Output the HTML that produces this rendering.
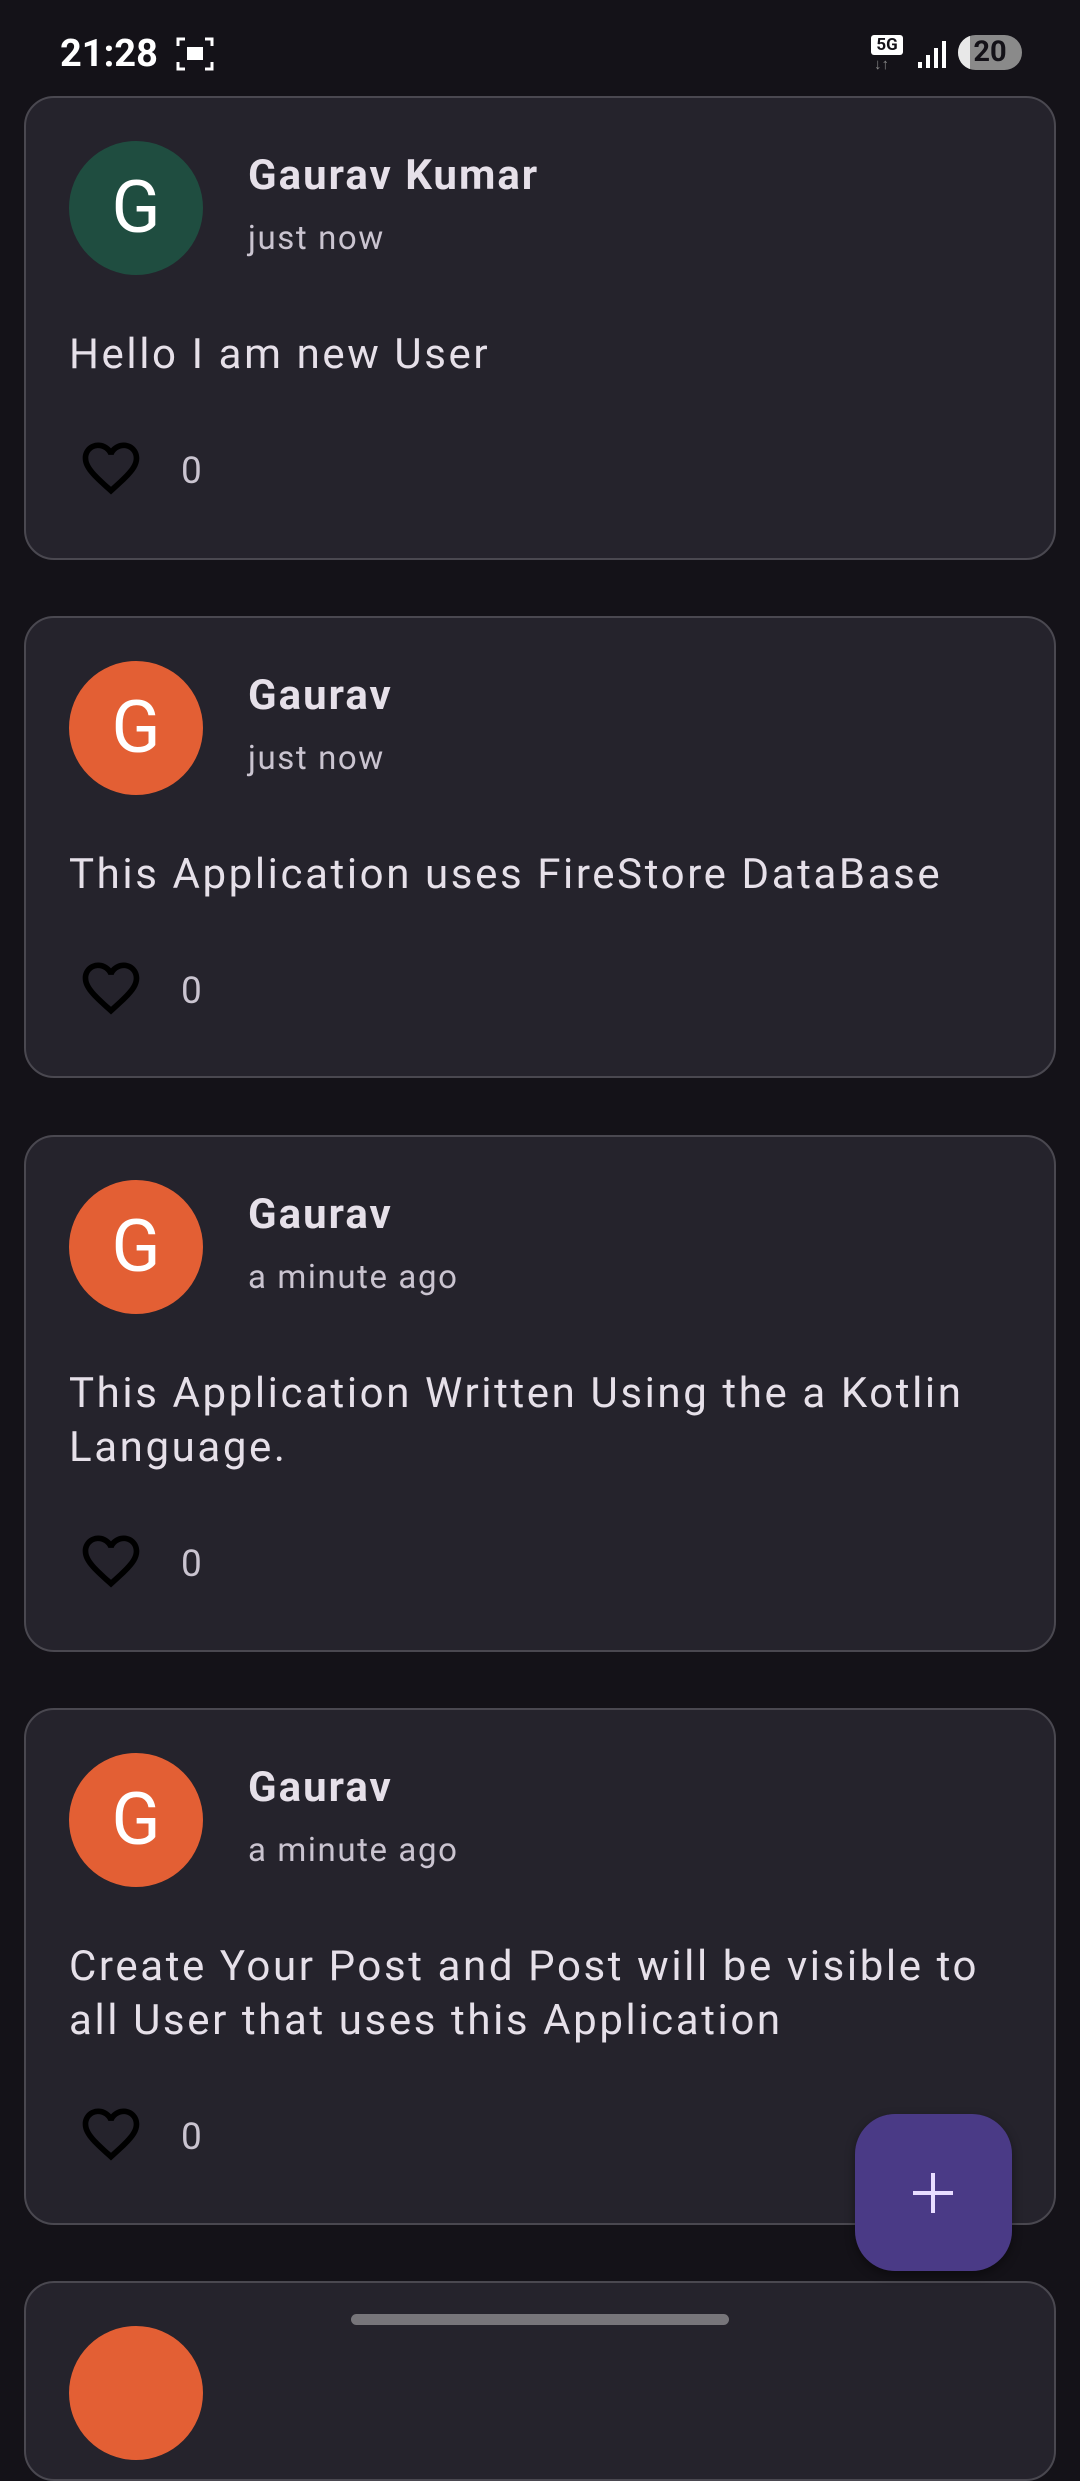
<!DOCTYPE html>
<html><head><meta charset="utf-8"><style>
*{margin:0;padding:0;box-sizing:border-box}
body{width:1080px;height:2340px;background:#141218;position:relative;overflow:hidden;font-family:"Roboto","Liberation Sans",sans-serif;color:#e6e0e9}
.card{position:absolute;left:24px;width:1032px;background:#25232c;border:2px solid #4a4850;border-radius:30px}
.av{position:absolute;left:43px;width:134px;height:134px;border-radius:50%;color:#fff;font-size:72px;text-align:center;line-height:134px}
.name{position:absolute;left:222px;font-weight:bold;font-size:42px;letter-spacing:2px;line-height:48px;white-space:nowrap}
.time{position:absolute;left:222px;font-size:33px;letter-spacing:1.6px;line-height:40px;color:#cac4d0}
.body{position:absolute;left:43px;width:960px;font-size:42px;letter-spacing:2.6px;line-height:54px}
.heart{position:absolute;left:51px;width:68px;height:68px}
.cnt{position:absolute;left:155px;font-size:37px;line-height:44px;color:#cac4d0}
</style></head><body>
<div style="position:absolute;left:60px;top:32px;font-weight:bold;font-size:38px;color:#fff">21:28</div>
<svg style="position:absolute;left:176px;top:36px" width="38" height="36" viewBox="0 0 38 36" fill="none" stroke="#fff" stroke-width="3"><path d="M2 10V3h7M29 3h7v7M36 26v7h-7M9 33H2v-7"/><rect x="11" y="11" width="16" height="13" fill="#fff" stroke="none"/></svg>
<div style="position:absolute;left:871px;top:35px;width:32px;height:20px;background:#fff;border-radius:3px;color:#141218;font-size:17px;font-weight:bold;text-align:center;line-height:20px">5G</div>
<div style="position:absolute;left:874px;top:55px;font-size:15px;color:#888">↓↑</div>
<div style="position:absolute;left:918px;top:62px;width:4px;height:6px;background:#fff"></div>
<div style="position:absolute;left:926px;top:55px;width:4px;height:13px;background:#fff"></div>
<div style="position:absolute;left:934px;top:48px;width:4px;height:20px;background:#fff"></div>
<div style="position:absolute;left:942px;top:41px;width:4px;height:27px;background:#fff"></div>
<div style="position:absolute;left:958px;top:35px;width:64px;height:35px;border-radius:18px;background:#8a8a8a;overflow:hidden"><div style="width:12px;height:35px;background:#e8e8e8"></div></div>
<div style="position:absolute;left:958px;top:35px;width:64px;height:35px;text-align:center;font-weight:bold;font-size:29px;line-height:35px;color:#141218">20</div>

<div class="card" style="top:96px;height:464px">
<div class="av" style="top:43px;background:#1f4d40">G</div>
<div class="name" style="top:54px">Gaurav Kumar</div>
<div class="time" style="top:121px">just now</div>
<div class="body" style="top:230px">Hello I am new User</div>
<svg class="heart" style="top:336px" viewBox="0 0 24 24"><path d="M16.5 3c-1.74 0-3.41.81-4.5 2.09C10.91 3.81 9.24 3 7.5 3 4.42 3 2 5.420 2 8.5c0 3.78 3.4 6.86 8.55 11.54L12 21.35l1.45-1.32C18.6 15.36 22 12.28 22 8.5 22 5.42 19.58 3 16.5 3zm-4.4 15.55l-.1.1-.1-.1C7.14 14.24 4 11.39 4 8.5 4 6.5 5.5 5 7.5 5c1.54 0 3.04.99 3.57 2.36h1.87C13.46 5.99 14.96 5 16.5 5c2 0 3.5 1.5 3.5 3.5 0 2.89-3.14 5.74-7.9 10.05z" fill="#000"/></svg>
<div class="cnt" style="top:352px">0</div>
</div>

<div class="card" style="top:616px;height:462px">
<div class="av" style="top:43px;background:#e35f34">G</div>
<div class="name" style="top:54px">Gaurav</div>
<div class="time" style="top:121px">just now</div>
<div class="body" style="top:230px">This Application uses FireStore DataBase</div>
<svg class="heart" style="top:336px" viewBox="0 0 24 24"><path d="M16.5 3c-1.74 0-3.41.81-4.5 2.09C10.91 3.81 9.24 3 7.5 3 4.42 3 2 5.42 2 8.5c0 3.78 3.4 6.86 8.55 11.54L12 21.35l1.45-1.32C18.6 15.36 22 12.28 22 8.5 22 5.42 19.58 3 16.5 3zm-4.4 15.55l-.1.1-.1-.1C7.14 14.24 4 11.39 4 8.5 4 6.5 5.5 5 7.5 5c1.54 0 3.04.99 3.57 2.36h1.87C13.46 5.99 14.96 5 16.5 5c2 0 3.5 1.5 3.5 3.5 0 2.89-3.14 5.74-7.9 10.05z" fill="#000"/></svg>
<div class="cnt" style="top:352px">0</div>
</div>

<div class="card" style="top:1135px;height:517px">
<div class="av" style="top:43px;background:#e35f34">G</div>
<div class="name" style="top:54px">Gaurav</div>
<div class="time" style="top:121px">a minute ago</div>
<div class="body" style="top:230px">This Application Written Using the a Kotlin<br>Language.</div>
<svg class="heart" style="top:390px" viewBox="0 0 24 24"><path d="M16.5 3c-1.74 0-3.41.81-4.5 2.09C10.91 3.81 9.24 3 7.5 3 4.42 3 2 5.42 2 8.5c0 3.78 3.4 6.86 8.55 11.54L12 21.35l1.45-1.32C18.6 15.36 22 12.28 22 8.5 22 5.42 19.58 3 16.5 3zm-4.4 15.55l-.1.1-.1-.1C7.14 14.24 4 11.39 4 8.5 4 6.5 5.5 5 7.5 5c1.54 0 3.04.99 3.57 2.36h1.87C13.46 5.99 14.96 5 16.5 5c2 0 3.5 1.5 3.5 3.5 0 2.89-3.14 5.74-7.9 10.05z" fill="#000"/></svg>
<div class="cnt" style="top:406px">0</div>
</div>

<div class="card" style="top:1708px;height:517px">
<div class="av" style="top:43px;background:#e35f34">G</div>
<div class="name" style="top:54px">Gaurav</div>
<div class="time" style="top:121px">a minute ago</div>
<div class="body" style="top:230px">Create Your Post and Post will be visible to<br>all User that uses this Application</div>
<svg class="heart" style="top:390px" viewBox="0 0 24 24"><path d="M16.5 3c-1.74 0-3.41.81-4.5 2.09C10.91 3.81 9.24 3 7.5 3 4.42 3 2 5.42 2 8.5c0 3.78 3.4 6.86 8.55 11.54L12 21.35l1.45-1.32C18.6 15.36 22 12.28 22 8.5 22 5.42 19.58 3 16.5 3zm-4.4 15.55l-.1.1-.1-.1C7.14 14.24 4 11.39 4 8.5 4 6.5 5.5 5 7.5 5c1.54 0 3.04.99 3.57 2.36h1.87C13.46 5.99 14.96 5 16.5 5c2 0 3.5 1.5 3.5 3.5 0 2.89-3.14 5.74-7.9 10.05z" fill="#000"/></svg>
<div class="cnt" style="top:406px">0</div>
</div>

<div class="card" style="top:2281px;height:200px">
<div class="av" style="top:43px;background:#e35f34"></div>
</div>

<div style="position:absolute;left:855px;top:2114px;width:157px;height:157px;border-radius:40px;background:#4a3a86;box-shadow:0 4px 10px rgba(0,0,0,.4)"></div>
<div style="position:absolute;left:913px;top:2191px;width:40px;height:4px;background:#e8ddff"></div>
<div style="position:absolute;left:931px;top:2173px;width:4px;height:40px;background:#e8ddff"></div>

<div style="position:absolute;left:351px;top:2314px;width:378px;height:11px;border-radius:6px;background:#77757a"></div>
</body></html>
